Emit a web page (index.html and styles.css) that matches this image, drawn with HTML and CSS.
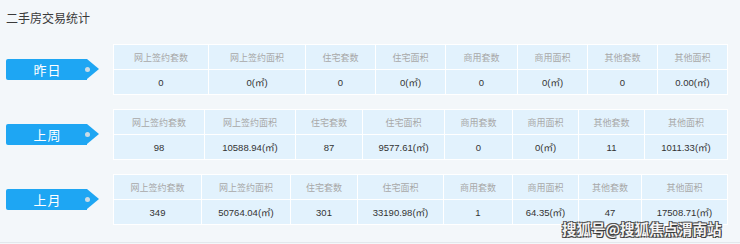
FILE: index.html
```html
<!DOCTYPE html>
<html lang="zh-CN">
<head>
<meta charset="utf-8">
<title>二手房交易统计</title>
<link rel="stylesheet" href="styles.css">
</head>
<body>
<div class="page">
  <div class="title">二手房交易统计</div>

  <div class="section">
    <div class="badge-wrap"><div class="badge"><span>昨日</span><i class="dot"></i></div></div>
    <table class="stats t1">
      <tr class="head"><td>网上签约套数</td><td>网上签约面积</td><td>住宅套数</td><td>住宅面积</td><td>商用套数</td><td>商用面积</td><td>其他套数</td><td>其他面积</td></tr>
      <tr class="body"><td>0</td><td>0(㎡)</td><td>0</td><td>0(㎡)</td><td>0</td><td>0(㎡)</td><td>0</td><td>0.00(㎡)</td></tr>
    </table>
  </div>

  <div class="section">
    <div class="badge-wrap"><div class="badge"><span>上周</span><i class="dot"></i></div></div>
    <table class="stats t2">
      <tr class="head"><td>网上签约套数</td><td>网上签约面积</td><td>住宅套数</td><td>住宅面积</td><td>商用套数</td><td>商用面积</td><td>其他套数</td><td>其他面积</td></tr>
      <tr class="body"><td>98</td><td>10588.94(㎡)</td><td>87</td><td>9577.61(㎡)</td><td>0</td><td>0(㎡)</td><td>11</td><td>1011.33(㎡)</td></tr>
    </table>
  </div>

  <div class="section">
    <div class="badge-wrap"><div class="badge"><span>上月</span><i class="dot"></i></div></div>
    <table class="stats t3">
      <tr class="head"><td>网上签约套数</td><td>网上签约面积</td><td>住宅套数</td><td>住宅面积</td><td>商用套数</td><td>商用面积</td><td>其他套数</td><td>其他面积</td></tr>
      <tr class="body"><td>349</td><td>50764.04(㎡)</td><td>301</td><td>33190.98(㎡)</td><td>1</td><td>64.35(㎡)</td><td>47</td><td>17508.71(㎡)</td></tr>
    </table>
  </div>

  <div class="watermark">搜狐号@搜狐焦点渭南站</div>
</div>
</body>
</html>
```

FILE: styles.css
```css
html, body {
  margin: 0;
  padding: 0;
  background: #f3f7fa;
}
.page {
  position: relative;
  width: 740px;
  height: 242px;
  border-bottom: 1px solid #e3e8ec;
  overflow: hidden;
  font-family: "Liberation Sans", "Noto Sans CJK SC", sans-serif;
}
.title {
  height: 36px;
  line-height: 36px;
  padding-left: 6px;
  margin-bottom: 8px;
  font-size: 12px;
  color: #3a3a3a;
  font-family: "Noto Sans CJK SC", sans-serif;
}
.section {
  display: flex;
  align-items: center;
  margin-bottom: 14px;
}
.badge-wrap {
  width: 113px;
  flex: none;
}
.badge {
  position: relative;
  margin-left: 6px;
  width: 81px;
  height: 21px;
  background: #1ea6f3;
  border-radius: 2px 0 0 2px;
  color: #fff;
  font-family: "Noto Sans CJK SC", sans-serif;
  font-size: 13px;
  line-height: 21px;
  text-align: center;
}
.badge span {
  display: block;
  padding-left: 2px;
  letter-spacing: 1px;
}
.badge::after {
  content: "";
  position: absolute;
  left: 81px;
  top: 0;
  border-top: 10.5px solid transparent;
  border-bottom: 10.5px solid transparent;
  border-left: 12px solid #1ea6f3;
}
.dot {
  position: absolute;
  left: 79px;
  top: 8px;
  width: 5px;
  height: 5px;
  border-radius: 50%;
  background: #c9dbe6;
  z-index: 1;
}
.stats {
  border-collapse: collapse;
  table-layout: fixed;
  font-size: 9px;
}
.stats td {
  border: 1px solid #fff;
  background: #e2f2fd;
  text-align: center;
  padding: 0;
  white-space: nowrap;
}
.stats .head td {
  height: 24px;
  color: #a8a8a8;
  font-family: "Noto Sans CJK SC", sans-serif;
  font-size: 9px;
}
.stats .body td {
  height: 24px;
  color: #333;
  font-size: 9.5px;
}

.t1 td:nth-child(1) { width: 94px; }
.t1 td:nth-child(2) { width: 96px; }
.t1 td:nth-child(3) { width: 69px; }
.t1 td:nth-child(4) { width: 69px; }
.t1 td:nth-child(5) { width: 71px; }
.t1 td:nth-child(6) { width: 69px; }
.t1 td:nth-child(7) { width: 69px; }
.t1 td:nth-child(8) { width: 69px; }

.t2 td:nth-child(1) { width: 90px; }
.t2 td:nth-child(2) { width: 90px; }
.t2 td:nth-child(3) { width: 66px; }
.t2 td:nth-child(4) { width: 81px; }
.t2 td:nth-child(5) { width: 67px; }
.t2 td:nth-child(6) { width: 65px; }
.t2 td:nth-child(7) { width: 65px; }
.t2 td:nth-child(8) { width: 82px; }

.t3 td:nth-child(1) { width: 87px; }
.t3 td:nth-child(2) { width: 88px; }
.t3 td:nth-child(3) { width: 66px; }
.t3 td:nth-child(4) { width: 85px; }
.t3 td:nth-child(5) { width: 68px; }
.t3 td:nth-child(6) { width: 65px; }
.t3 td:nth-child(7) { width: 62px; }
.t3 td:nth-child(8) { width: 85px; }

.watermark {
  position: absolute;
  left: 562px;
  top: 219px;
  white-space: nowrap;
  font-family: "Noto Sans CJK SC", sans-serif;
  font-size: 14.5px;
  font-weight: bold;
  line-height: 19px;
  color: #f4f4f4;
  text-shadow: 1px 1px 0 #3a3a3a, -1px -1px 0 #555, 1px -1px 0 #555, -1px 1px 0 #555;
}
```
